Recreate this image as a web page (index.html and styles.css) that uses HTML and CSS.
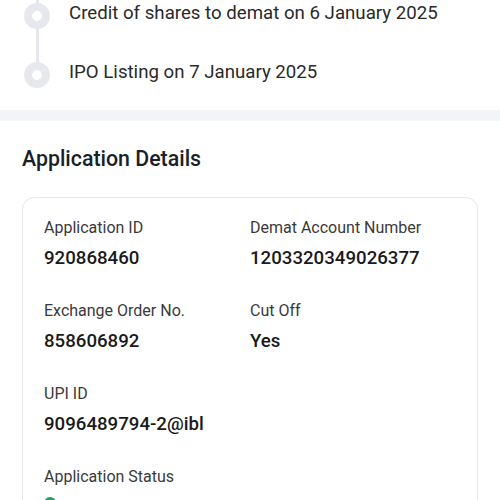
FILE: index.html
```html
<!DOCTYPE html>
<html>
<head>
<meta charset="utf-8">
<link rel="stylesheet" href="styles.css">
</head>
<body>
<section class="timeline">
  <div class="step">
    <div class="rail"><span class="seg-top"></span><span class="dot"></span><span class="seg"></span></div>
    <div class="step-text">Credit of shares to demat on 6 January 2025</div>
  </div>
  <div class="step last">
    <div class="rail"><span class="seg-top"></span><span class="dot"></span></div>
    <div class="step-text">IPO Listing on 7 January 2025</div>
  </div>
</section>
<div class="band"></div>
<section class="details">
  <h2 class="title">Application Details</h2>
  <div class="card">
    <div class="grid">
      <div class="field">
        <div class="label">Application ID</div>
        <div class="value">920868460</div>
      </div>
      <div class="field">
        <div class="label">Demat Account Number</div>
        <div class="value">1203320349026377</div>
      </div>
      <div class="field">
        <div class="label">Exchange Order No.</div>
        <div class="value">858606892</div>
      </div>
      <div class="field">
        <div class="label">Cut Off</div>
        <div class="value">Yes</div>
      </div>
      <div class="field">
        <div class="label">UPI ID</div>
        <div class="value">9096489794-2@ibl</div>
      </div>
      <div class="field"></div>
      <div class="field">
        <div class="label">Application Status</div>
        <div class="value status"><span class="status-dot"></span></div>
      </div>
    </div>
  </div>
</section>
</body>
</html>
```
FILE: styles.css
```css
* { box-sizing: border-box; }
html, body { margin: 0; padding: 0; background: #ffffff; }
body {
  font-family: Roboto, "Liberation Sans", sans-serif;
  color: #1a1a1a;
  width: 500px;
  overflow: hidden;
}
.timeline {
  padding: 0 0 0 24px;
  height: 110px;
}
.step {
  display: flex;
  align-items: stretch;
  height: 59px;
}
.step.last { height: 51px; }
.rail {
  width: 26px;
  display: flex;
  flex-direction: column;
  align-items: center;
  flex: none;
}
.seg-top { width: 3px; height: 3px; background: #e6e8ee; flex: none; }
.seg { width: 3px; flex: 1; background: #e6e8ee; }
.dot {
  width: 26px;
  height: 26px;
  border-radius: 50%;
  border: 8px solid #e6e8ee;
  background: #ffffff;
  flex: none;
}
.step-text {
  margin-left: 19px;
  font-size: 18.67px;
  line-height: 26px;
  color: #2a2a2a;
}
.band {
  height: 11px;
  background: #f3f4f8;
}
.details {
  padding: 24px 22px 0 22px;
}
.title {
  margin: 0;
  font-size: 21.33px;
  line-height: 28px;
  font-weight: 500;
  color: #1b1f29;
}
.card {
  margin-top: 24px;
  border: 1px solid #e6e7ec;
  border-radius: 12px;
  padding: 20px 21px 20px 21px;
}
.grid {
  display: grid;
  grid-template-columns: 1fr 1fr;
  row-gap: 31px;
}
.label {
  font-size: 16px;
  line-height: 20px;
  color: #3a3a3a;
}
.value {
  margin-top: 8px;
  font-size: 18.67px;
  line-height: 24px;
  font-weight: 500;
  color: #1a1a1a;
}
.status {
  display: flex;
  align-items: flex-start;
  height: 24px;
}
.status-dot {
  width: 12px;
  height: 12px;
  border-radius: 50%;
  background: #1f9d6b;
  margin-top: 2px;
  flex: none;
}
```
